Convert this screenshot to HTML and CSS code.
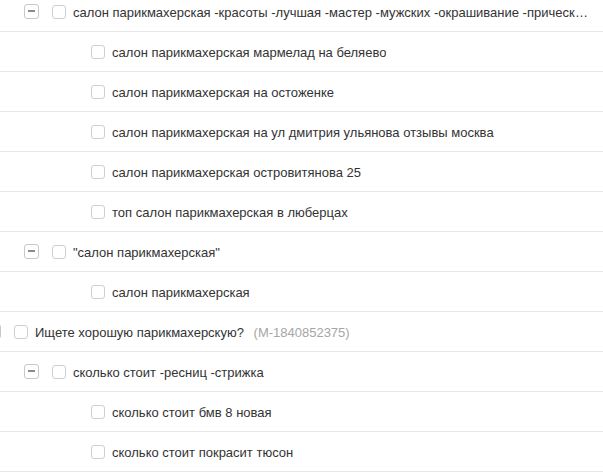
FILE: index.html
```html
<!DOCTYPE html>
<html lang="ru">
<head>
    <meta charset="UTF-8">
    <title>Фразы</title>
    <link rel="stylesheet" href="styles.css">
</head>
<body>
<div class="tree">
    <div class="row lvl-1">
        <span class="toggle"></span>
        <span class="check"></span>
        <span class="label">салон парикмахерская -красоты -лучшая -мастер -мужских -окрашивание -прическа -стрижка -цены</span>
    </div>
    <div class="row lvl-2">
        <span class="toggle empty"></span>
        <span class="check"></span>
        <span class="label">салон парикмахерская мармелад на беляево</span>
    </div>
    <div class="row lvl-2">
        <span class="toggle empty"></span>
        <span class="check"></span>
        <span class="label">салон парикмахерская на остоженке</span>
    </div>
    <div class="row lvl-2">
        <span class="toggle empty"></span>
        <span class="check"></span>
        <span class="label">салон парикмахерская на ул дмитрия ульянова отзывы москва</span>
    </div>
    <div class="row lvl-2">
        <span class="toggle empty"></span>
        <span class="check"></span>
        <span class="label">салон парикмахерская островитянова 25</span>
    </div>
    <div class="row lvl-2">
        <span class="toggle empty"></span>
        <span class="check"></span>
        <span class="label">топ салон парикмахерская в люберцах</span>
    </div>
    <div class="row lvl-1">
        <span class="toggle"></span>
        <span class="check"></span>
        <span class="label">"салон парикмахерская"</span>
    </div>
    <div class="row lvl-2">
        <span class="toggle empty"></span>
        <span class="check"></span>
        <span class="label">салон парикмахерская</span>
    </div>
    <div class="row lvl-0">
        <span class="toggle"></span>
        <span class="check"></span>
        <span class="label">Ищете хорошую парикмахерскую? <span class="muted">(M-1840852375)</span></span>
    </div>
    <div class="row lvl-1">
        <span class="toggle"></span>
        <span class="check"></span>
        <span class="label">сколько стоит -ресниц -стрижка</span>
    </div>
    <div class="row lvl-2">
        <span class="toggle empty"></span>
        <span class="check"></span>
        <span class="label">сколько стоит бмв 8 новая</span>
    </div>
    <div class="row lvl-2">
        <span class="toggle empty"></span>
        <span class="check"></span>
        <span class="label">сколько стоит покрасит тюсон</span>
    </div>
</div>
</body>
</html>
```

FILE: styles.css
```css
body {
    margin: 0;
    padding: 0;
    background-color: #ffffff;
    color: #333;
    font-family: 'Liberation Sans', Arial, sans-serif;
    font-size: 13px;
    overflow: hidden;
}
.tree {
    margin-top: -8px;
    margin-left: -14px;
}
.row {
    display: flex;
    align-items: center;
    height: 40px;
    box-sizing: border-box;
    border-bottom: 1px solid #e8e8e8;
    padding-right: 14px;
}
.lvl-0 { padding-left: 0; }
.lvl-1 { padding-left: 38px; }
.lvl-2 { padding-left: 77px; }
.toggle {
    position: relative;
    flex: none;
    width: 13px;
    height: 13px;
    margin-right: 13px;
    border: 1px solid #c8c8c8;
    border-radius: 3px;
}
.toggle::before {
    content: "";
    position: absolute;
    left: 3px;
    top: 5px;
    width: 7px;
    height: 2px;
    background-color: #8a8a8a;
}
.toggle.empty {
    border-color: transparent;
}
.toggle.empty::before {
    display: none;
}
.check {
    flex: none;
    width: 12px;
    height: 12px;
    margin-right: 7px;
    border: 1px solid #cfcfcf;
    border-radius: 3px;
}
.label {
    white-space: nowrap;
    overflow: hidden;
    text-overflow: ellipsis;
    padding-top: 2px;
}
.muted {
    color: #a6a6a6;
    margin-left: 6px;
}
```
